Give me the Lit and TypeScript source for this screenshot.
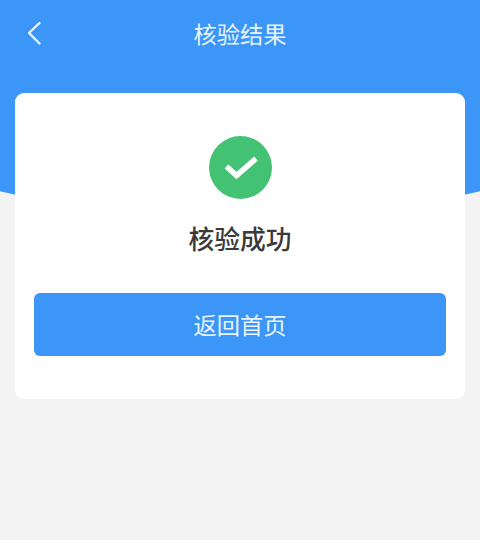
import { LitElement, html, css } from "lit";
import { customElement } from "lit/decorators.js";

@customElement("app-root")
export class AppRoot extends LitElement {
  static styles = css`
    :host {
      display: block;
      width: 480px;
      height: 540px;
      overflow: hidden;
      font-family: "Noto Sans CJK SC", "Liberation Sans", sans-serif;
    }
    .page {
      display: grid;
      grid-template-columns: 480px;
      width: 480px;
      height: 540px;
      overflow: hidden;
      background: #f3f3f3;
    }
    .arc,
    .content {
      grid-area: 1 / 1;
    }
    .arc {
      width: 720px;
      height: 216px;
      margin-left: -120px;
      background: #3c96f8;
      border-radius: 0 0 360px 360px / 0 0 97px 97px;
    }
    .content {
      display: flex;
      flex-direction: column;
      min-width: 0;
    }
    .nav {
      height: 93px;
      padding: 0 0 28px;
      box-sizing: border-box;
      display: grid;
      grid-template-columns: 1fr auto 1fr;
      align-items: center;
    }
    .back {
      display: block;
      width: 16px;
      height: 26px;
      margin-left: 26px;
    }
    .title {
      font-size: 23.25px;
      line-height: 32px;
      color: #e9f3fe;
    }
    .card {
      margin: 0 15px;
      height: 306px;
      box-sizing: border-box;
      padding: 43px 19px 0;
      background: #fff;
      border-radius: 9px;
      display: flex;
      flex-direction: column;
      align-items: center;
    }
    .ok {
      display: block;
      width: 63px;
      height: 63px;
    }
    .result {
      margin-top: 20px;
      font-size: 25.75px;
      line-height: 38px;
      font-weight: 500;
      color: #3a3a3a;
    }
    .btn {
      margin-top: 36px;
      align-self: stretch;
      height: 63px;
      padding-bottom: 2px;
      box-sizing: border-box;
      display: flex;
      align-items: center;
      justify-content: center;
      background: #3c96f8;
      border-radius: 6px;
      font-size: 23.25px;
      color: #e9f3fe;
    }
  `;

  render() {
    return html`
      <div class="page">
        <div class="arc"></div>
        <div class="content">
          <div class="nav">
            <svg class="back" viewBox="0 0 16 26" fill="none">
              <path d="M13.5 3 L3 13 L13.5 23.5" stroke="#eaf4ff" stroke-width="2.4" stroke-linecap="round" stroke-linejoin="round" />
            </svg>
            <div class="title">核验结果</div>
            <div></div>
          </div>
          <div class="card">
            <svg class="ok" viewBox="0 0 63 63">
              <circle cx="31.5" cy="31.5" r="31.5" fill="#44c274" />
              <path d="M17.5 30.5 L27.5 39.5 L47 22.5" fill="none" stroke="#fff" stroke-width="5.6" />
            </svg>
            <div class="result">核验成功</div>
            <div class="btn">返回首页</div>
          </div>
        </div>
      </div>
    `;
  }
}
